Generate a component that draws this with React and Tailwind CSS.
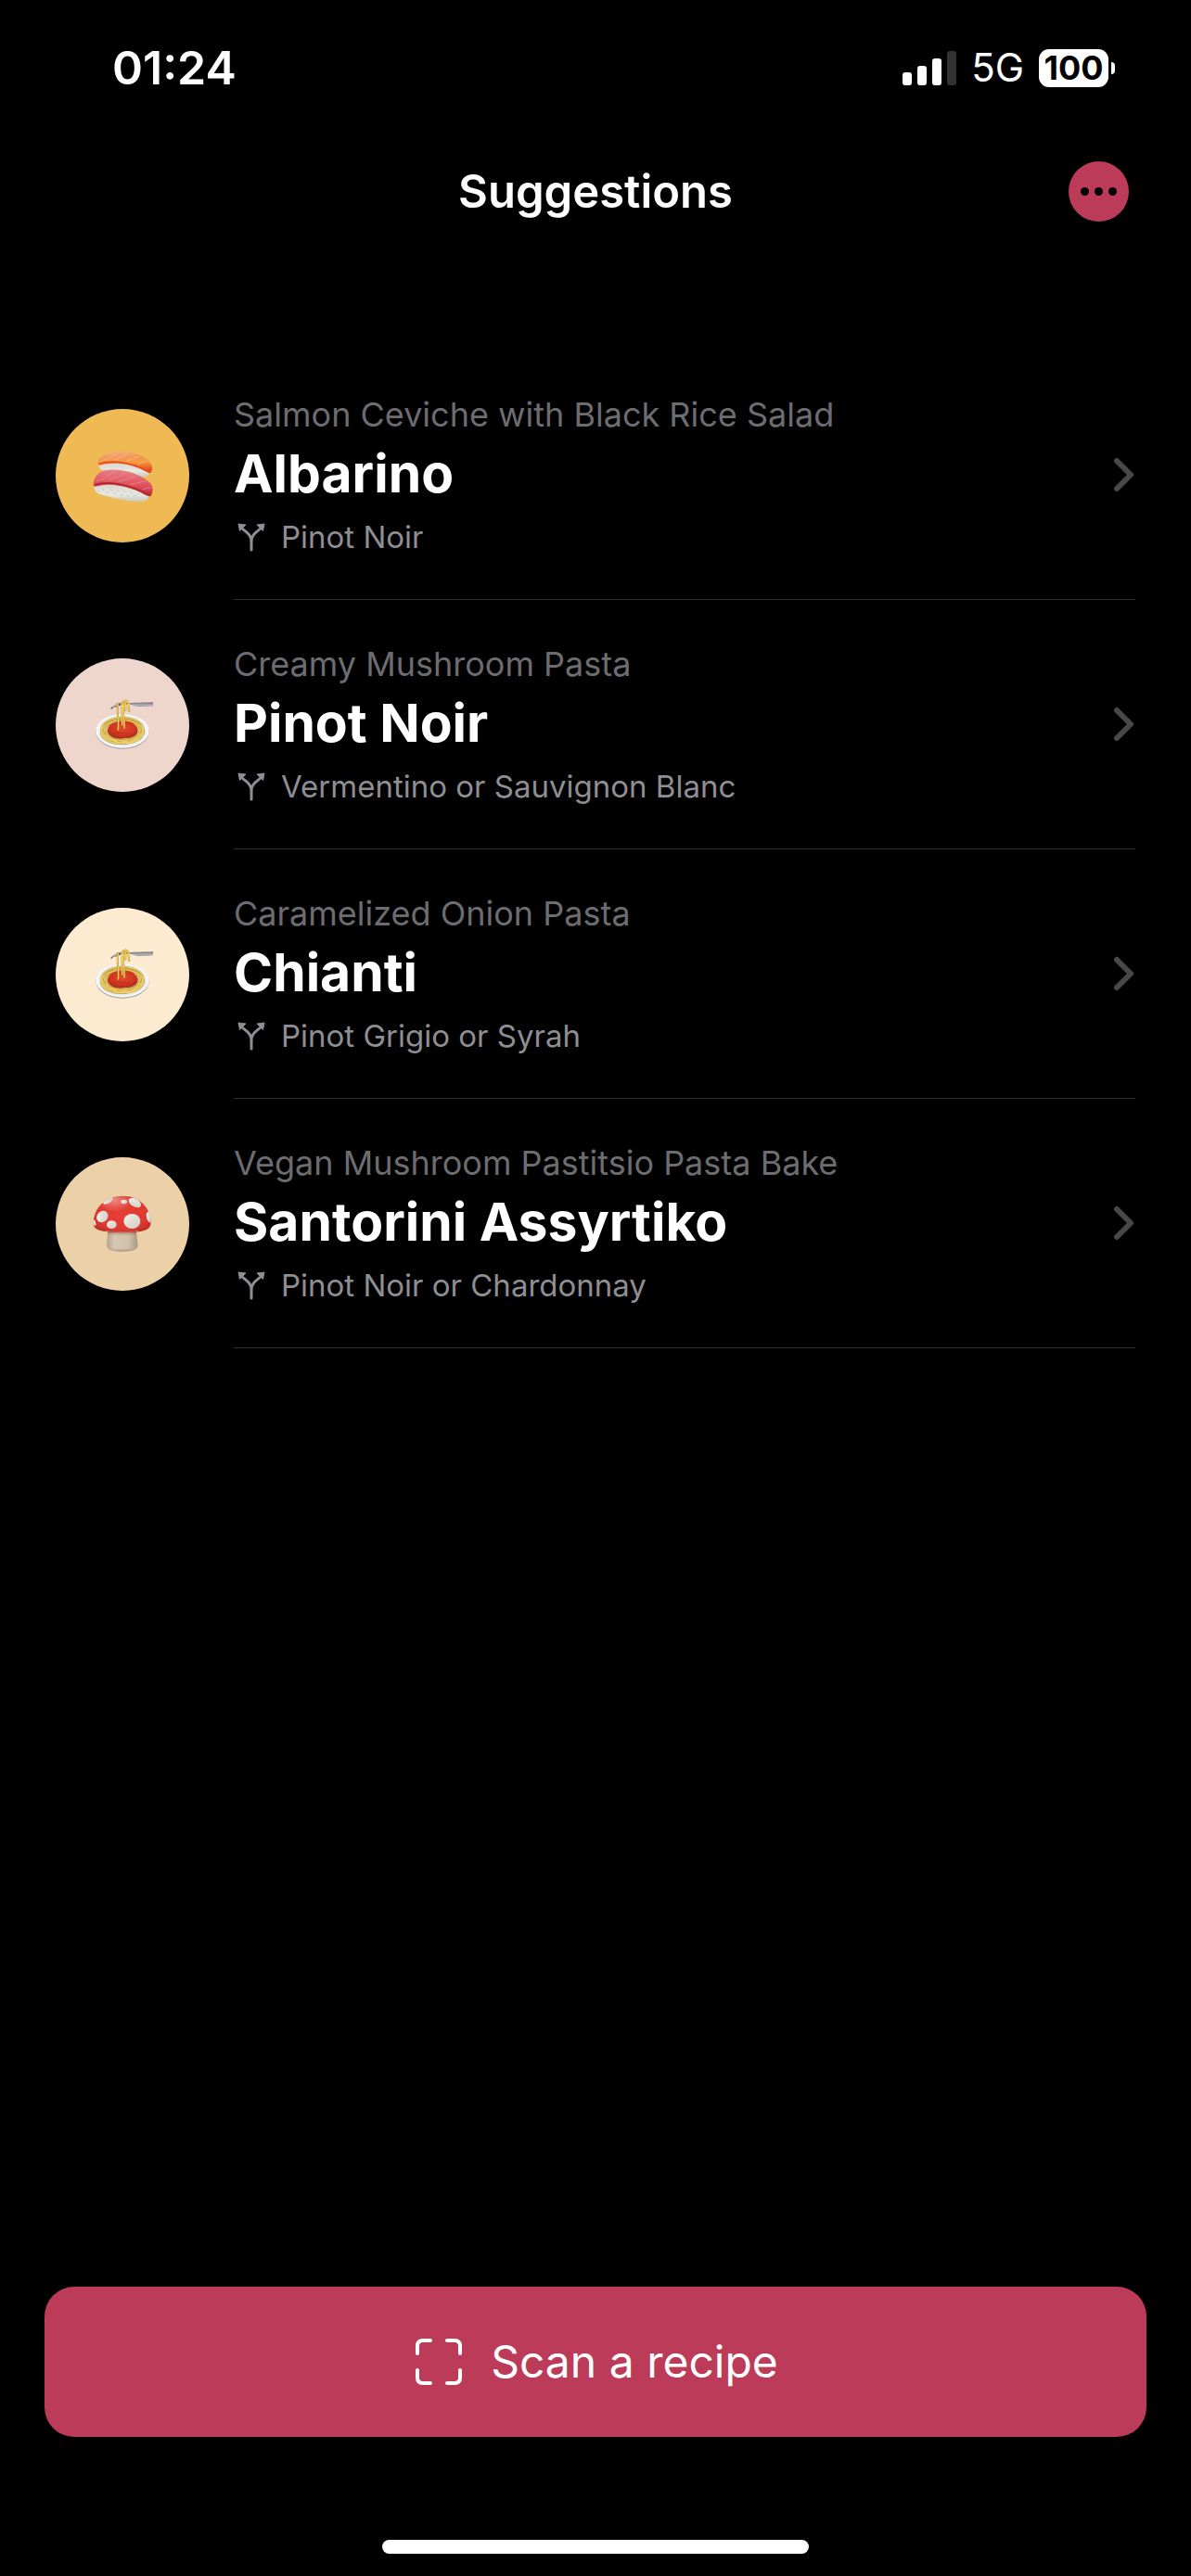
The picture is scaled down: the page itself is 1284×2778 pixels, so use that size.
import React from "react";

function Sushi() {
  return (
    <svg viewBox="36 6 240 240" className="size-20" aria-hidden="true">
      <defs>
        <linearGradient id="salmon" x1="0" y1="0" x2="0.15" y2="1">
          <stop offset="0" stopColor="#f2b184" />
          <stop offset="0.3" stopColor="#f3995c" />
          <stop offset="0.6" stopColor="#f79a3c" />
          <stop offset="1" stopColor="#e2471b" />
        </linearGradient>
        <linearGradient id="tuna" x1="0.1" y1="0" x2="0" y2="1">
          <stop offset="0" stopColor="#e87f86" />
          <stop offset="0.5" stopColor="#e0525c" />
          <stop offset="1" stopColor="#b5202b" />
        </linearGradient>
        <linearGradient id="rice" x1="0" y1="0" x2="0" y2="1">
          <stop offset="0" stopColor="#d5d4cc" />
          <stop offset="0.6" stopColor="#e8e8e2" />
          <stop offset="1" stopColor="#c9c8bd" />
        </linearGradient>
      </defs>
      <path d="M80 88C78 102 88 110 110 112L200 124C220 134 240 132 243 116L210 96L140 82Z" fill="url(#rice)" />
      <path d="M76 82C80 62 108 47 158 48C206 50 252 72 252 100C252 112 248 119 242 117C222 108 208 98 170 90C138 84 104 86 84 92C78 92 75 88 76 82Z" fill="url(#salmon)" />
      <path d="M80 88C110 78 160 80 200 95C220 102 234 111 244 114" fill="none" stroke="#e84a1d" strokeWidth="6" />
      <path d="M92 76C112 70 122 68 136 54M122 76C146 74 154 62 178 54M168 78C188 74 194 66 212 62M205 88C220 86 226 80 238 78" fill="none" stroke="#f7bd8a" strokeWidth="2" />
      <path d="M65 156C62 172 70 184 96 190C132 201 184 210 216 210C234 209 242 198 242 186L150 158L90 150Z" fill="url(#rice)" />
      <path d="M76 174l7 4m8-9l6 5m7 7l8-2m4-10l7 5m4 10l8-3m3-9l8 5m2 11l9-1m2-12l7 5m4 10l8-1m3-11l7 6m5 7l8-2m3-8l6 6" stroke="#bcbdb2" strokeWidth="2.5" />
      <path d="M62 157C62 130 80 108 112 107C164 104 214 120 246 150C257 162 255 181 247 193C232 193 216 176 186 168C148 156 108 150 74 160C68 162 63 161 62 157Z" fill="url(#tuna)" />
      <path d="M66 156C102 145 150 152 186 164C214 172 230 187 246 188" fill="none" stroke="#b52632" strokeWidth="6" />
      <path d="M72 143C96 140 110 126 130 113M108 141C130 137 146 126 168 116M142 145C166 143 180 132 202 126M180 155C200 153 212 146 232 144M220 170C232 168 240 164 250 166" fill="none" stroke="#ec939a" strokeWidth="2" />
    </svg>
  );
}

function Spaghetti() {
  return (
    <svg viewBox="36 18 240 240" className="size-20" aria-hidden="true">
      <defs>
        <radialGradient id="plate">
          <stop offset="0.6" stopColor="#d9dcdf" />
          <stop offset="0.85" stopColor="#e9ecee" />
          <stop offset="1" stopColor="#fbfbfb" />
        </radialGradient>
        <radialGradient id="sauce" cx="0.5" cy="0.4" r="0.6">
          <stop offset="0" stopColor="#e24a2c" />
          <stop offset="0.7" stopColor="#cf3420" />
          <stop offset="1" stopColor="#a92a17" />
        </radialGradient>
        <linearGradient id="fork" x1="0" y1="0" x2="0" y2="1">
          <stop offset="0" stopColor="#6e6e71" />
          <stop offset="0.4" stopColor="#b4b4b6" />
          <stop offset="1" stopColor="#454548" />
        </linearGradient>
      </defs>
      <ellipse cx="156" cy="159" rx="86" ry="56" fill="#98999c" />
      <ellipse cx="156" cy="157" rx="86" ry="55" fill="url(#plate)" />
      <ellipse cx="156" cy="156" rx="72" ry="43" fill="#dcc983" />
      <g fill="none" stroke="#b98f35" strokeWidth="7">
        <ellipse cx="156" cy="150" rx="66" ry="36" />
        <ellipse cx="149" cy="161" rx="62" ry="36" />
        <ellipse cx="164" cy="160" rx="60" ry="36" />
      </g>
      <g fill="none" stroke="#edd067" strokeWidth="4">
        <ellipse cx="156" cy="150" rx="67" ry="37" />
        <ellipse cx="149" cy="161" rx="62" ry="36" />
        <ellipse cx="164" cy="160" rx="60" ry="36" />
        <path d="M86 145C92 165 82 172 102 179C112 190 130 180 142 195C154 201 166 184 180 195C196 194 196 180 212 180C226 168 216 160 225 148" />
      </g>
      <path d="M108 156C110 136 126 128 144 126C164 122 190 126 200 141C208 151 207 165 198 171C184 183 160 179 150 182C131 182 108 173 108 156Z" fill="url(#sauce)" />
      <path d="M122 169l8-7 7 6 9-9 8 9 9-7 8 8 9-7" fill="none" stroke="#9e2918" strokeWidth="3" opacity=".6" />
      <path d="M118 83C126 75 136 67 148 66L183 66C205 64 222 66 255 64V76C232 77 210 80 195 76L180 71L149 72C138 73 128 80 120 87Z" fill="url(#fork)" />
      <path d="M133 79L154 70M140 67L160 77" stroke="#4c4c4f" strokeWidth="3" />
      <g fill="none" strokeLinecap="round">
        <path d="M142 153C146 120 136 95 142 69M155 138V68C156 58 170 55 174 65L178 93M162 147C164 115 153 90 161 67M166 90V64" stroke="#b88a29" strokeWidth="6" />
        <path d="M142 153C146 120 136 95 142 69M155 138V68C156 58 170 55 174 65L178 93M162 147C164 115 153 90 161 67M166 90V64M151 72C159 80 172 77 178 70" stroke="#f1d369" strokeWidth="3.5" />
      </g>
    </svg>
  );
}

function Mushroom() {
  return (
    <svg viewBox="36 27 240 240" className="size-20" aria-hidden="true">
      <defs>
        <linearGradient id="stem">
          <stop offset="0" stopColor="#b5a590" />
          <stop offset="0.25" stopColor="#d8c8b3" />
          <stop offset="0.7" stopColor="#d2c1ab" />
          <stop offset="1" stopColor="#a8977f" />
        </linearGradient>
        <linearGradient id="stemshade" x1="0" y1="0" x2="0" y2="1">
          <stop offset="0" stopColor="#6b5138" stopOpacity="0.8" />
          <stop offset="0.3" stopColor="#8b755c" stopOpacity="0" />
          <stop offset="0.85" stopColor="#8b755c" stopOpacity="0" />
          <stop offset="1" stopColor="#8b755c" stopOpacity="0.6" />
        </linearGradient>
        <radialGradient id="cap" cx="0.5" cy="0.5" r="0.58">
          <stop offset="0" stopColor="#e83f35" />
          <stop offset="0.7" stopColor="#df3a30" />
          <stop offset="1" stopColor="#b92e27" />
        </radialGradient>
        <radialGradient id="gloss" cx="0.37" cy="0.14" r="0.3">
          <stop offset="0" stopColor="#fff" stopOpacity="0.4" />
          <stop offset="1" stopColor="#fff" stopOpacity="0" />
        </radialGradient>
        <linearGradient id="spot" x1="0" y1="0" x2="1" y2="1">
          <stop offset="0" stopColor="#f7f5f2" />
          <stop offset="0.55" stopColor="#dedbd4" />
          <stop offset="1" stopColor="#d3cfc6" />
        </linearGradient>
        <clipPath id="capclip">
          <path d="M62 145C63 94 100 57 155 56C211 55 248 96 248 141C249 161 231 170 205 172C175 176 132 176 101 171C74 168 62 160 62 145Z" />
        </clipPath>
      </defs>
      <path d="M109 165L105 215C105 230 122 236 155 236C188 236 206 229 206 216L200 165Z" fill="url(#stem)" />
      <path d="M109 165L105 215C105 230 122 236 155 236C188 236 206 229 206 216L200 165Z" fill="url(#stemshade)" />
      <g clipPath="url(#capclip)">
        <rect x="60" y="52" width="192" height="126" fill="url(#cap)" />
        <rect x="60" y="52" width="192" height="126" fill="url(#gloss)" />
        <path d="M60 154C85 172 220 173 250 151V180H60Z" fill="#ae2b25" opacity=".4" />
        <path d="M100 169C132 173 178 173 208 169" fill="none" stroke="#f27068" strokeWidth="3" opacity=".7" />
        <g fill="url(#spot)">
          <ellipse cx="109" cy="71" rx="18" ry="9" transform="rotate(-30 109 71)" />
          <ellipse cx="161" cy="75" rx="10" ry="7" />
          <ellipse cx="196" cy="78" rx="22" ry="13" transform="rotate(30 196 78)" />
          <ellipse cx="91" cy="123" rx="20" ry="17" transform="rotate(-45 91 123)" />
          <ellipse cx="121" cy="149" rx="16" ry="13" />
          <ellipse cx="187" cy="138" rx="27" ry="24" />
          <ellipse cx="243" cy="125" rx="9" ry="18" transform="rotate(-15 243 125)" />
          <ellipse cx="66" cy="143" rx="4" ry="10" transform="rotate(-12 66 143)" />
        </g>
      </g>
    </svg>
  );
}

function ForkArrows() {
  return (
    <svg viewBox="0 0 36 36" className="size-9" fill="none" aria-hidden="true">
      <path d="M19 32V23C19 15 13 13 8 8M19 23C19 15 25 13 30 8" stroke="#8e8e93" strokeWidth="3" strokeLinecap="round" />
      <path d="M5 4L13 5L6.500 11.500ZM33 4L25 5L31.500 11.500Z" fill="#8e8e93" stroke="#8e8e93" strokeWidth="1" strokeLinejoin="round" />
    </svg>
  );
}

const suggestions = [
  { dish: "Salmon Ceviche with Black Rice Salad", wine: "Albarino", other: "Pinot Noir", color: "bg-[#efba54]", Art: Sushi },
  { dish: "Creamy Mushroom Pasta", wine: "Pinot Noir", other: "Vermentino or Sauvignon Blanc", color: "bg-[#efd6cd]", Art: Spaghetti },
  { dish: "Caramelized Onion Pasta", wine: "Chianti", other: "Pinot Grigio or Syrah", color: "bg-[#fcebd1]", Art: Spaghetti },
  { dish: "Vegan Mushroom Pastitsio Pasta Bake", wine: "Santorini Assyrtiko", other: "Pinot Noir or Chardonnay", color: "bg-[#ecd1a8]", Art: Mushroom },
];

function StatusBar() {
  return (
    <div className="flex h-[146px] items-center justify-between pr-[82px] pl-[121px]">
      <time className="text-[50px] leading-none font-semibold">01:24</time>
      <div className="flex items-center">
        <div className="flex h-[37px] items-end gap-1.5" role="img" aria-label="Signal, three of four bars">
          <span className="h-3.5 w-2.5 rounded-[3px] bg-white" />
          <span className="h-[21px] w-2.5 rounded-[3px] bg-white" />
          <span className="h-[29px] w-2.5 rounded-[3px] bg-white" />
          <span className="h-[37px] w-2.5 rounded-[3px] bg-[#333333]" />
        </div>
        <span className="ml-4 text-[42px] leading-none">5G</span>
        <span className="ml-4 flex h-[41px] w-[75px] items-center justify-center rounded-[11px] bg-white text-[36px] leading-none font-bold text-black">
          100
        </span>
        <span className="ml-[3px] h-[13px] w-1 rounded-r-full bg-white" />
      </div>
    </div>
  );
}

function SuggestionRow({ dish, wine, other, color, Art }) {
  return (
    <li>
      <a href="#" className="flex items-stretch gap-12">
        <span className={`flex size-36 shrink-0 items-center justify-center self-center rounded-full ${color}`}>
          <Art />
        </span>
        <span className="flex h-[269px] min-w-0 flex-1 items-center justify-between border-b border-[#303033]">
          <span className="flex flex-col">
            <span className="text-[36px] leading-[44px] text-[#6c6c71]">{dish}</span>
            <span className="mt-1 text-[57px] leading-[76px] font-bold">{wine}</span>
            <span className="mt-2.5 flex items-center gap-[15px] text-[33px] leading-10 text-[#8e8e93]">
              <ForkArrows />
              {other}
            </span>
          </span>
          <svg viewBox="0 0 24 42" className="h-[42px] w-6 shrink-0" fill="none" aria-hidden="true">
            <path d="M4 6L19 21L4 36" stroke="#48484a" strokeWidth="6" strokeLinecap="round" strokeLinejoin="round" />
          </svg>
        </span>
      </a>
    </li>
  );
}

export default function App() {
  return (
    <div className="flex min-h-screen flex-col bg-black font-['Inter',sans-serif] text-white">
      <StatusBar />
      <header className="grid h-[121px] grid-cols-[1fr_auto_1fr] items-center px-[67px]">
        <h1 className="col-start-2 text-[49px] leading-none font-semibold">Suggestions</h1>
        <button type="button" aria-label="More options" className="flex size-[65px] items-center justify-center gap-1.5 justify-self-end rounded-full bg-[#bb3b58]">
          <span className="size-[9px] rounded-full bg-black" />
          <span className="size-[9px] rounded-full bg-black" />
          <span className="size-[9px] rounded-full bg-black" />
        </button>
      </header>
      <main className="flex-1 px-[60px] pt-[111px]">
        <ul>
          {suggestions.map((item) => (
            <SuggestionRow key={item.wine} {...item} />
          ))}
        </ul>
      </main>
      <footer className="px-12 pb-6">
        <button type="button" className="flex h-[162px] w-full items-center justify-center gap-7 rounded-[32px] bg-[#bb3b58] text-[48px] leading-none">
          <svg viewBox="0 0 56 56" className="size-14" fill="none" stroke="white" strokeWidth="4" strokeLinecap="round" aria-hidden="true">
            <path d="M5 19V11Q5 5 11 5H19M37 5H45Q51 5 51 11V19M51 37V45Q51 51 45 51H37M19 51H11Q5 51 5 45V37" />
          </svg>
          Scan a recipe
        </button>
        <div className="mx-auto mt-[111px] h-[15px] w-[460px] rounded-full bg-white" />
      </footer>
    </div>
  );
}
